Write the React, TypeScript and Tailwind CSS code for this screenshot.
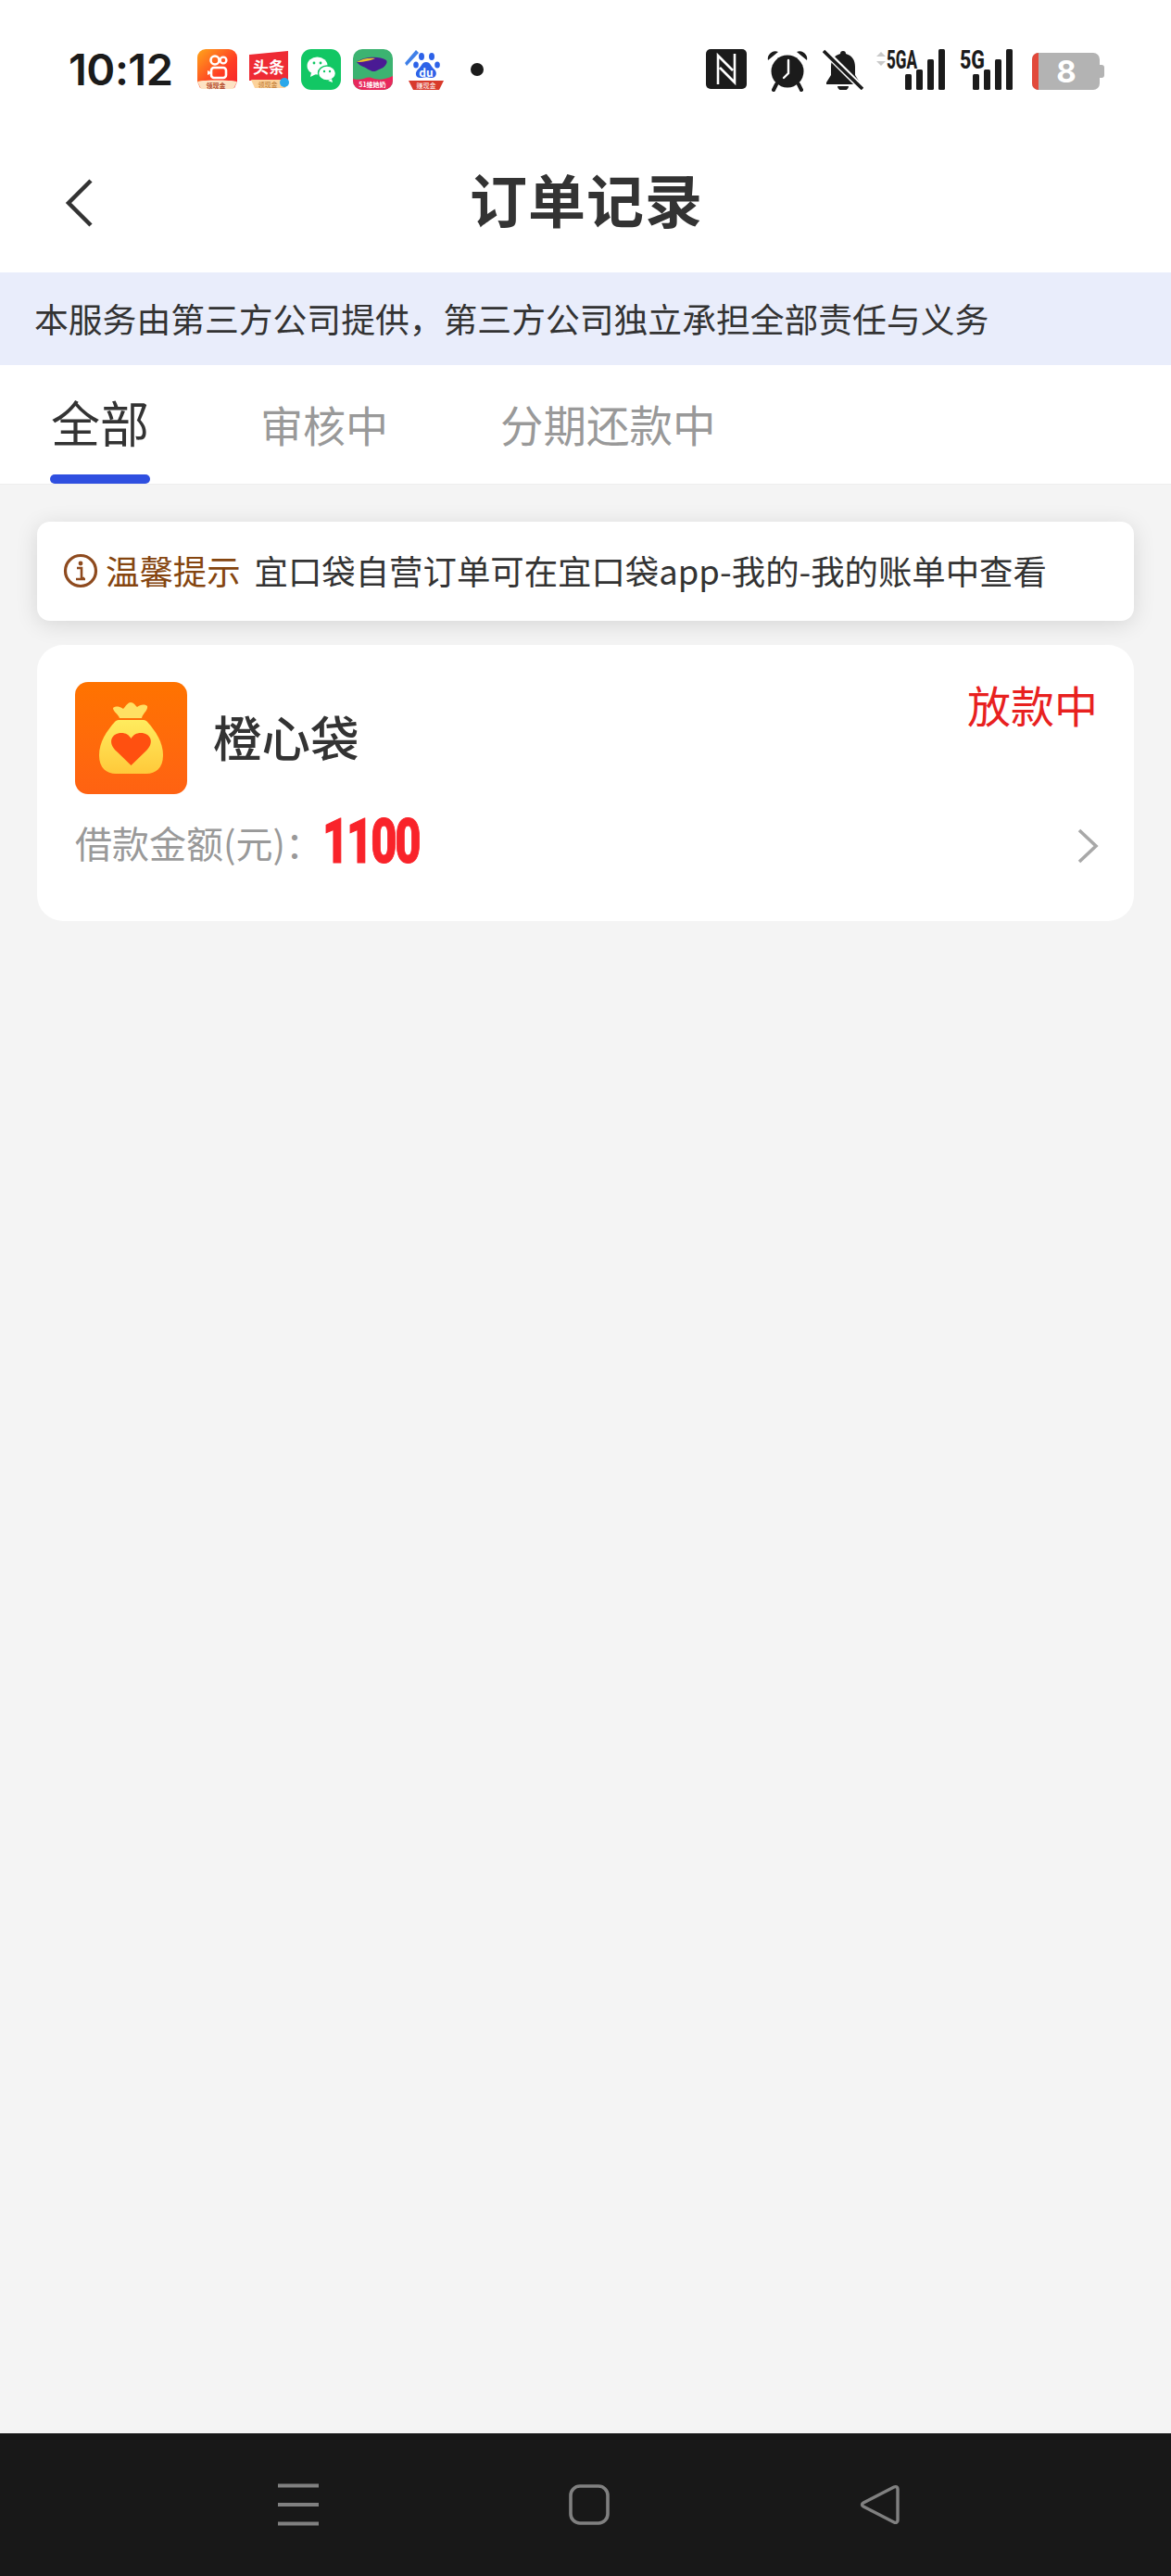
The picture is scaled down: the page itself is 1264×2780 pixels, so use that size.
import React from "react";

function Kuaishou() {
  return (
    <svg width="43" height="44" viewBox="0 0 43 44">
      <defs>
        <linearGradient id="ks" x1="0" y1="0" x2="1" y2="1">
          <stop offset="0" stopColor="#ffa61a" />
          <stop offset="0.6" stopColor="#ff3d24" />
          <stop offset="1" stopColor="#f5222d" />
        </linearGradient>
      </defs>
      <path d="M9 0h25a9 9 0 0 1 9 9v26l-3 7H3l-3-7V9a9 9 0 0 1 9-9z" fill="url(#ks)" />
      <circle cx="19" cy="12" r="4.5" fill="none" stroke="#fff" strokeWidth="2.6" />
      <circle cx="28" cy="12" r="3.4" fill="none" stroke="#fff" strokeWidth="2.4" />
      <rect x="15" y="20" width="16" height="11" rx="3" fill="none" stroke="#fff" strokeWidth="2.6" />
      <path d="M15 25l-4-2v5l4-2z" fill="#fff" />
      <path d="M0 35c8-2 34-2 43 0l-4 8H4z" fill="#fde3c4" />
      <text x="20" y="42" textAnchor="middle" fontSize="7" fontWeight="700" fill="#b3492a">领现金</text>
    </svg>
  );
}

function Toutiao() {
  return (
    <svg width="43" height="44" viewBox="0 0 43 44">
      <path d="M0 6l42-4v31L0 34z" fill="#ee2b34" />
      <text x="21" y="26" textAnchor="middle" fontSize="17" fontWeight="700" fill="#fff">头条</text>
      <path d="M2 33h40l-3 9H6z" fill="#fcd29b" />
      <text x="20" y="41" textAnchor="middle" fontSize="7" fill="#b8722c">领现金</text>
      <circle cx="38" cy="36" r="5" fill="#2aa7ea" />
    </svg>
  );
}

function Wechat() {
  return (
    <svg width="43" height="44" viewBox="0 0 43 44">
      <rect width="43" height="44" rx="11" fill="#12c764" />
      <ellipse cx="17.5" cy="18" rx="11" ry="9.5" fill="#fff" />
      <path d="M11 25l-1 5 6-3z" fill="#fff" />
      <ellipse cx="28" cy="26" rx="9.5" ry="8" fill="#fff" stroke="#12c764" strokeWidth="1.4" />
      <path d="M33 32l1 4-5-2z" fill="#fff" />
      <circle cx="14" cy="15" r="1.4" fill="#12c764" />
      <circle cx="21" cy="15" r="1.4" fill="#12c764" />
      <circle cx="25" cy="24" r="1.2" fill="#12c764" />
      <circle cx="31" cy="24" r="1.2" fill="#12c764" />
    </svg>
  );
}

function Whale() {
  return (
    <svg width="43" height="44" viewBox="0 0 43 44">
      <defs>
        <clipPath id="wh">
          <rect width="43" height="44" rx="10" />
        </clipPath>
      </defs>
      <g clipPath="url(#wh)">
        <rect width="43" height="44" fill="#3cb371" />
        <path d="M4 14c8-6 24-7 32-2 2 2-1 8-8 10-3 2-7 3-9 1-4-1-4-3-8-4-3-1-5-3-7-5z" fill="#4a1a94" />
        <path d="M4 14c6-4 14-5 20-4-4 2-12 4-20 4z" fill="#e8c52c" />
        <path d="M0 32c10 3 14-3 20-1s12 3 23-2v15H0z" fill="#e8285c" />
        <text x="21" y="41" textAnchor="middle" fontSize="7" fontWeight="700" fill="#fff">51维她奶</text>
      </g>
    </svg>
  );
}

function Baidu() {
  return (
    <svg width="45" height="44" viewBox="0 0 45 44">
      <path d="M0 15L12 1l3 3L2 18z" fill="#3f7fe8" />
      <ellipse cx="18" cy="8" rx="3" ry="4" fill="#2d62e8" />
      <ellipse cx="29" cy="8" rx="3" ry="4" fill="#2d62e8" />
      <ellipse cx="12" cy="17" rx="2.8" ry="3.6" fill="#2d62e8" />
      <ellipse cx="35" cy="17" rx="2.8" ry="3.6" fill="#2d62e8" />
      <path d="M23 14c5 0 5 5 9 8 4 4 1 10-4 9-3-1-7-1-10 0-6 1-8-5-4-9 4-3 4-8 9-8z" fill="#2d62e8" />
      <text x="23" y="30" textAnchor="middle" fontSize="12" fontWeight="700" fill="#fff">du</text>
      <path d="M4 34h38l-5 10H9z" fill="#d8392b" />
      <text x="23" y="42" textAnchor="middle" fontSize="7" fill="#fff">赚现金</text>
    </svg>
  );
}

function Nfc() {
  return (
    <svg width="44" height="43" viewBox="0 0 44 43">
      <rect width="44" height="43" rx="5" fill="#1b1b1b" />
      <path d="M13 38V7l16 16M31 5v31L15 20" fill="none" stroke="#fff" strokeWidth="2.6" />
    </svg>
  );
}

function Alarm() {
  return (
    <svg width="46" height="46" viewBox="0 0 46 46">
      <circle cx="23" cy="24" r="17.5" fill="#1b1b1b" />
      <path d="M2 12a8 8 0 0 1 11-9z M44 12a8 8 0 0 0-11-9z" fill="#1b1b1b" />
      <path d="M11 38l-3 6M35 38l3 6" stroke="#1b1b1b" strokeWidth="4" strokeLinecap="round" />
      <path d="M24 12v14l-5 5" fill="none" stroke="#fff" strokeWidth="2.4" strokeLinecap="round" />
    </svg>
  );
}

function BellOff() {
  return (
    <svg width="44" height="44" viewBox="0 0 44 44">
      <path d="M22 2c2 0 3 1 3 3 7 2 10 7 10 14v9l5 8v2H4v-2l5-8v-9C9 12 12 7 19 5c0-2 1-3 3-3z" fill="#1b1b1b" />
      <path d="M16 40a6 5 0 0 0 12 0z" fill="#1b1b1b" />
      <path d="M0 0l44 44" stroke="#fff" strokeWidth="7" />
      <path d="M1 2l42 41" stroke="#1b1b1b" strokeWidth="3.6" />
    </svg>
  );
}

function Signal({ label, width, arrows }: { label: string; width: number; arrows?: boolean }) {
  const x0 = width - 47;
  return (
    <svg width={width} height="56" viewBox={`0 -12 ${width} 56`} className="-mt-[12px]">
      {arrows && (
        <g fill="#c9c9c9">
          <path d="M0 8l5-5 5 5z" />
          <path d="M0 13l5 5 5-5z" />
        </g>
      )}
      <text
        x={arrows ? 11 : 0}
        y="21"
        fontSize="27"
        fontWeight="800"
        fill="#1b1b1b"
        textLength={arrows ? 33 : 27}
        lengthAdjust="spacingAndGlyphs"
        fontFamily="'Roboto', sans-serif"
      >
        {label}
      </text>
      <rect x={x0 + 4} y="27" width="7" height="17" rx="1.5" fill="#1b1b1b" />
      <rect x={x0 + 16} y="22" width="7" height="22" rx="1.5" fill="#1b1b1b" />
      <rect x={x0 + 28} y="11" width="7" height="33" rx="1.5" fill="#1b1b1b" />
      <rect x={x0 + 40} y="0" width="7" height="44" rx="1.5" fill="#1b1b1b" />
    </svg>
  );
}

function Battery() {
  return (
    <svg width="78" height="40" viewBox="0 0 78 40">
      <defs>
        <clipPath id="bat">
          <rect width="73" height="40" rx="7" />
        </clipPath>
      </defs>
      <g clipPath="url(#bat)">
        <rect width="73" height="40" fill="#b3b3b3" />
        <rect width="7" height="40" fill="#e2493b" />
      </g>
      <path d="M73 13h2a3 3 0 0 1 3 3v8a3 3 0 0 1-3 3h-2z" fill="#b3b3b3" />
      <text x="37" y="32" textAnchor="middle" fontSize="33" fontWeight="700" fill="#fff" fontFamily="'Inter', sans-serif">
        8
      </text>
    </svg>
  );
}

function BagLogo() {
  return (
    <div className="w-[121px] h-[121px] rounded-[14px] bg-gradient-to-b from-[#ff7300] to-[#ff6212] flex items-center justify-center shrink-0">
      <svg width="121" height="121" viewBox="0 0 121 121">
        <defs>
          <linearGradient id="bag" x1="0" y1="0" x2="0" y2="1">
            <stop offset="0" stopColor="#ffec5e" />
            <stop offset="1" stopColor="#ffc93a" />
          </linearGradient>
        </defs>
        <path d="M41 28c4-3 8-1 11 1 3-3 5-7 8-7 3 0 5 3 7 5 3-2 7-4 11-1 1 5-5 8-6 13H48c-1-4-7-7-7-11z" fill="#ffe063" />
        <path d="M47 41h27c2 0 3 1 4 2 9 10 17 22 17 36 0 14-8 20-18 20H44c-10 0-18-6-18-20 0-14 8-26 17-36 1-1 2-2 4-2z" fill="url(#bag)" />
        <path d="M60.500 90L45 75c-11-10-5-20 5-20 5 0 8 2 10.500 6 2.500-4 5.500-6 10.500-6 10 0 16 10 5 20z" fill="#ff5010" />
      </svg>
    </div>
  );
}

export default function App() {
  return (
    <div className="w-[1264px] h-[2780px] flex flex-col bg-[#f4f4f4] text-[#333] font-['Noto_Sans_CJK_SC','Noto_Sans',sans-serif]">
      <div className="h-[142px] bg-white shrink-0 flex items-start pt-[53px] pl-[74px]">
        <span className="w-[139px] text-[47px] leading-[44px] font-semibold text-[#1b1b1b] font-['Inter',sans-serif] tracking-[-0.5px]">
          10:12
        </span>
        <div className="flex items-center gap-[13px]">
          <Kuaishou />
          <Toutiao />
          <Wechat />
          <Whale />
          <Baidu />
        </div>
        <span className="ml-[26px] mt-[15px] w-[14px] h-[14px] rounded-full bg-[#1b1b1b]" />
        <div className="ml-[240px] flex items-start gap-[21px]">
          <Nfc />
          <Alarm />
          <div className="ml-[-6px]">
            <BellOff />
          </div>
          <div className="flex items-start gap-[16px] ml-[-7px]">
            <Signal label="5GA" width={74} arrows />
            <Signal label="5G" width={57} />
          </div>
          <div className="mt-[4px]">
            <Battery />
          </div>
        </div>
      </div>

      <div className="h-[152px] bg-white shrink-0 relative flex items-center justify-center pb-[9px] pl-[2px]">
        <svg className="absolute left-[69px] top-[50px]" width="34" height="54" viewBox="0 0 34 54">
          <path d="M29 3L5 27l24 24" fill="none" stroke="#333" strokeWidth="4.5" />
        </svg>
        <span className="text-[62px] leading-none font-bold text-[#333] tracking-[1px]">订单记录</span>
      </div>

      <div className="h-[100px] bg-[#e9edfb] shrink-0 flex items-center pl-[37px] text-[36.8px] text-[#333]">
        本服务由第三方公司提供，第三方公司独立承担全部责任与义务
      </div>

      <div className="h-[129px] bg-white shrink-0 flex items-start pl-[54px] border-b border-[#eeeeee]">
        <div className="flex flex-col items-center">
          <span className="text-[53px] leading-[64px] mt-[29px] text-[#333]">全部</span>
          <span className="w-[108px] h-[10px] rounded-full bg-[#2f4fe0] mt-[25px]" />
        </div>
        <span className="ml-[119px] mt-[31px] text-[46px] leading-[64px] text-[#999]">审核中</span>
        <span className="ml-[121px] mt-[31px] text-[46.5px] leading-[64px] text-[#999]">分期还款中</span>
      </div>

      <div className="flex-1 px-[40px] pt-[40px]">
        <div className="h-[107px] rounded-[14px] bg-white shadow-[0_4px_24px_rgba(0,0,0,0.12)] flex items-center pl-[28px] pb-[2px]">
          <svg width="38" height="38" viewBox="0 0 38 38" className="shrink-0">
            <circle cx="19" cy="19" r="16.5" fill="none" stroke="#8e4a1e" strokeWidth="3.2" />
            <circle cx="19" cy="11" r="2.4" fill="#8e4a1e" />
            <path d="M15 16h5v11h3M14 28h10" fill="none" stroke="#8e4a1e" strokeWidth="2.6" />
          </svg>
          <span className="ml-[8px] text-[36.4px] text-[#85450f]">温馨提示</span>
          <span className="ml-[15px] text-[36.4px] text-[#333]">宜口袋自营订单可在宜口袋app-我的-我的账单中查看</span>
        </div>

        <div className="mt-[26px] h-[298px] rounded-[28px] bg-white pt-[40px] pl-[41px] pr-[41px] flex flex-col">
          <div className="flex items-start justify-between">
            <div className="flex items-center gap-[28px]">
              <BagLogo />
              <span className="text-[52.5px] font-medium text-[#333] leading-none -mt-[5px]">橙心袋</span>
            </div>
            <span className="text-[47px] leading-[60px] text-[#e8211f] -mt-[6px] mr-[-2px]">放款中</span>
          </div>
          <div className="flex items-center justify-between mt-[20px] h-[64px]">
            <div className="flex items-center">
              <span className="text-[40px] text-[#999]">借款金额(元)：</span>
              <span className="inline-block origin-left scale-x-[0.74] text-[66px] leading-none font-black text-[#f9232a] tracking-[-3px] [-webkit-text-stroke:1px_#f9232a] font-['Roboto',sans-serif]">
                1100
              </span>
            </div>
            <svg width="24" height="38" viewBox="0 0 24 38" className="mt-[8px] mr-[-3px]">
              <path d="M3 2l18 17L3 36" fill="none" stroke="#a8a8a8" strokeWidth="3.6" />
            </svg>
          </div>
        </div>
      </div>

      <div className="h-[154px] bg-[#181818] shrink-0 flex items-center justify-center gap-[270px] pl-[8px]">
        <svg width="44" height="46" viewBox="0 0 44 46">
          <path d="M0 2.500h44M0 23h44M0 43.500h44" stroke="#808080" strokeWidth="4" />
        </svg>
        <svg width="44" height="44" viewBox="0 0 44 44">
          <rect x="2" y="2" width="40" height="40" rx="10" fill="none" stroke="#808080" strokeWidth="3.6" />
        </svg>
        <svg width="44" height="44" viewBox="0 0 44 44">
          <path d="M41 5c0-2-2-3-4-2L4 20c-2 1-2 3 0 4l33 17c2 1 4 0 4-2z" fill="none" stroke="#808080" strokeWidth="3.4" strokeLinejoin="round" />
        </svg>
      </div>
    </div>
  );
}
